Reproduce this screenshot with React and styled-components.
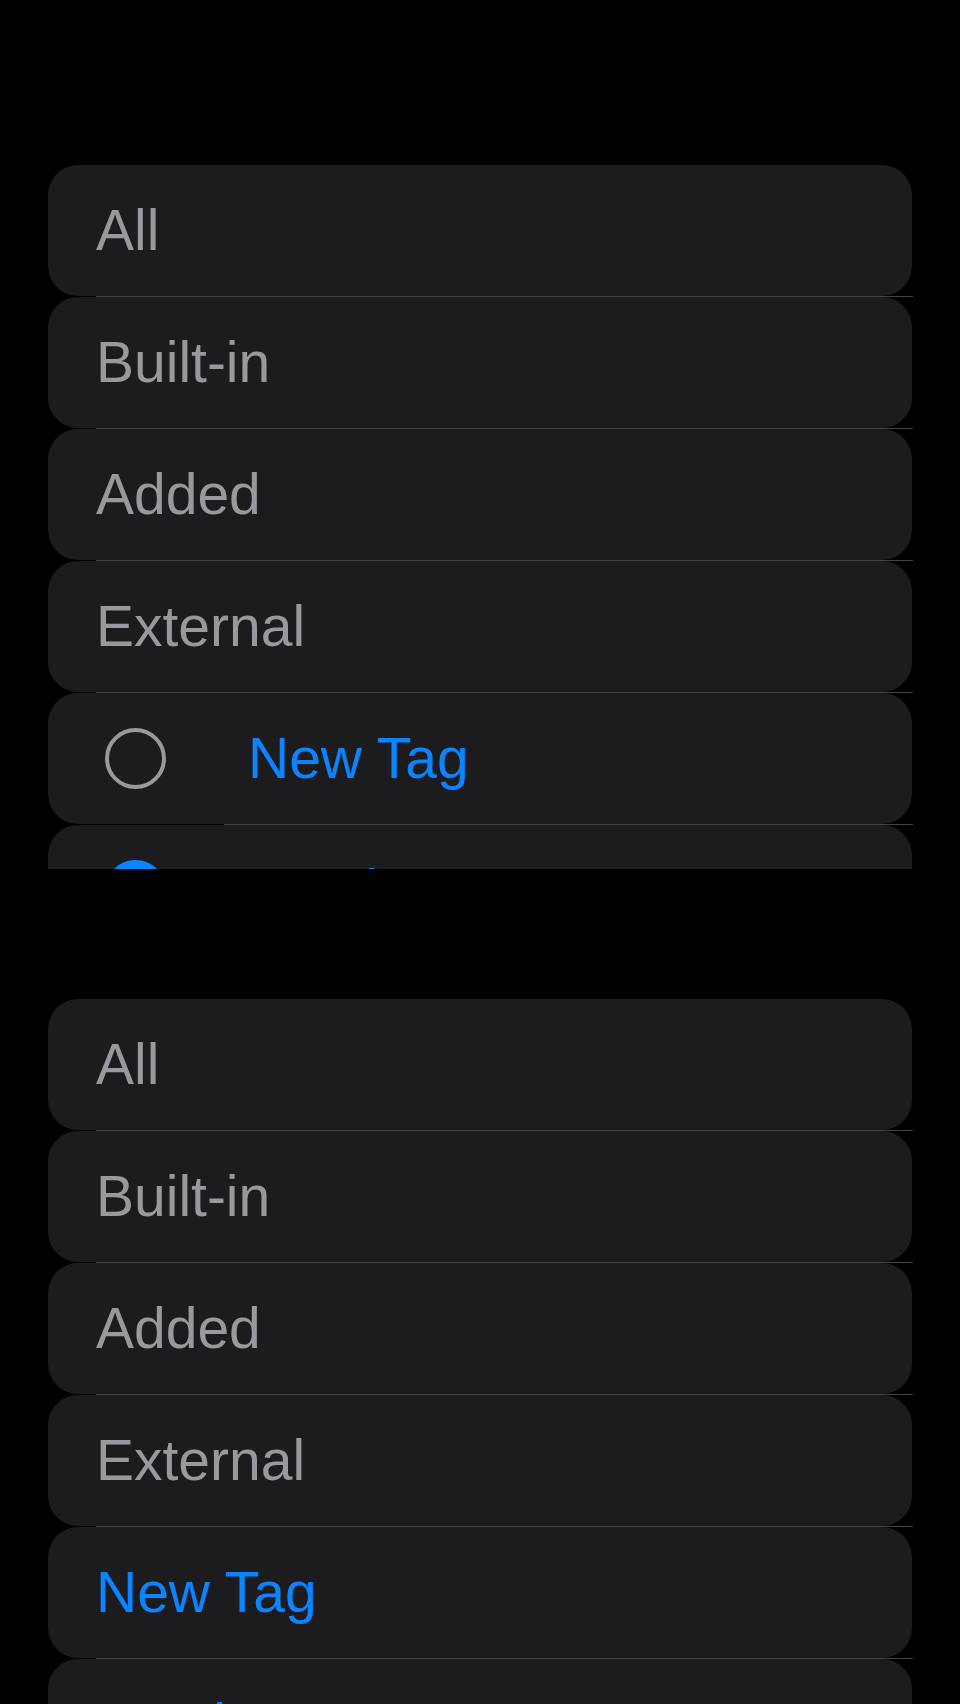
import React from "react";
import styled, { createGlobalStyle } from "styled-components";

const GlobalStyle = createGlobalStyle`
  html, body {
    margin: 0;
    padding: 0;
    background: #000;
  }
  body {
    font-family: "Liberation Sans", Arial, sans-serif;
    -webkit-font-smoothing: antialiased;
  }
`;

const Page = styled.div`
  display: flex;
  flex-direction: column;
  width: 960px;
  height: 1704px;
  overflow: hidden;
  background: #000;
`;

const Frame = styled.section`
  box-sizing: border-box;
  height: ${(p) => p.$height}px;
  padding-top: ${(p) => p.$top}px;
  overflow: hidden;
  flex-shrink: 0;
`;

const List = styled.ul`
  list-style: none;
  margin: 0 48px 0 48px;
  padding: 0;
  display: flex;
  flex-direction: column;
`;

const Row = styled.li`
  display: flex;
  flex-direction: column;
`;

const Card = styled.div`
  box-sizing: border-box;
  height: 131px;
  display: flex;
  align-items: center;
  padding-left: ${(p) => (p.$editing ? 57 : 48)}px;
  padding-bottom: 2px;
  background: #1c1c1e;
  border-radius: 30px;
`;

const Separator = styled.div`
  height: 1px;
  margin-left: ${(p) => (p.$editing ? 176 : 48)}px;
  margin-right: -1px;
  background: #434346;
`;

const Label = styled.span`
  font-size: 57px;
  line-height: normal;
  color: ${(p) => (p.$accent ? "#0a84ff" : "#98989e")};
  white-space: nowrap;
`;

const Select = styled.span`
  box-sizing: border-box;
  flex-shrink: 0;
  width: 61px;
  height: 61px;
  margin-right: 82px;
  margin-top: 2px;
  border-radius: 50%;
  display: flex;
  align-items: center;
  justify-content: center;
  border: ${(p) => (p.$checked ? "none" : "4px solid #98989e")};
  background: ${(p) => (p.$checked ? "#0a84ff" : "transparent")};
`;

const Check = () => (
  <svg width="30" height="30" viewBox="0 0 24 24" fill="none">
    <path
      d="M5 12.5l4.5 4.5L19 7.5"
      stroke="#fff"
      strokeWidth="3"
      strokeLinecap="round"
      strokeLinejoin="round"
    />
  </svg>
);

const FILTERS = ["All", "Built-in", "Added", "External"];

const TAGS = [
  { title: "New Tag", checked: false },
  { title: "Another Tag", checked: true },
];

const TagList = ({ editing }) => (
  <List>
    {FILTERS.map((title) => (
      <Row key={title}>
        <Card>
          <Label>{title}</Label>
        </Card>
        <Separator />
      </Row>
    ))}
    {TAGS.map((tag) => (
      <Row key={tag.title}>
        <Card $editing={editing}>
          {editing && (
            <Select $checked={tag.checked}>{tag.checked && <Check />}</Select>
          )}
          <Label $accent>{tag.title}</Label>
        </Card>
        <Separator $editing={editing} />
      </Row>
    ))}
  </List>
);

export default function App() {
  return (
    <>
      <GlobalStyle />
      <Page>
        <Frame $height={869} $top={165}>
          <TagList editing />
        </Frame>
        <Frame $height={835} $top={130}>
          <TagList />
        </Frame>
      </Page>
    </>
  );
}
